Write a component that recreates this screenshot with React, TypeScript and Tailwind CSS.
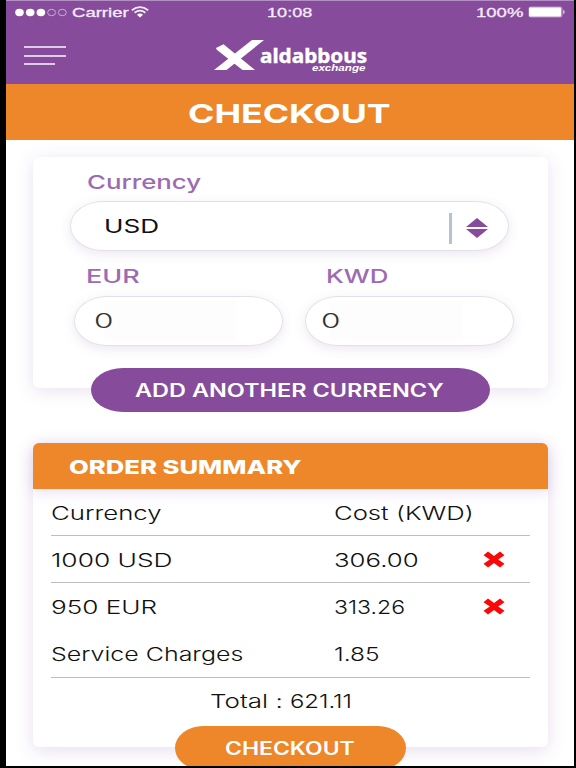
import { useLayoutEffect, useRef, useState } from "react"

// the wide lettering: text is stretched sideways until it fills its width
function Wide({ text, width, className = "" }: { text: string; width: number; className?: string }) {
    const ref = useRef<HTMLSpanElement>(null)
    const [scale, setScale] = useState(1)

    useLayoutEffect(() => {
        if (ref.current) setScale(width / ref.current.offsetWidth)
    }, [width, text])

    return (
        <span className={"block shrink-0 whitespace-nowrap " + className} style={{ width }}>
            <span ref={ref} className="inline-block origin-left" style={{ transform: `scaleX(${scale})` }}>{text}</span>
        </span>
    )
}

function StatusBar() {
    return (
        <div className="flex h-[24px] items-center pl-[9px] font-['Liberation_Sans',sans-serif] text-[13px] leading-[24px] text-[#f4edf7]">
            <svg width="53" height="10" viewBox="0 0 53 10" className="shrink-0">
                <ellipse cx="4.5" cy="4.5" rx="4.3" ry="3.7" fill="#fff" />
                <ellipse cx="15.2" cy="4.5" rx="4.3" ry="3.7" fill="#fff" />
                <ellipse cx="25.9" cy="4.5" rx="4.3" ry="3.7" fill="#fff" />
                <ellipse cx="36.6" cy="4.5" rx="4" ry="3.2" fill="none" stroke="#c9aed6" />
                <ellipse cx="47.3" cy="4.5" rx="4" ry="3.2" fill="none" stroke="#c9aed6" />
            </svg>
            <Wide text="Carrier" width={57} className="ml-[4px] [-webkit-text-stroke:0.3px_#f4edf7]" />
            <svg width="18" height="12" viewBox="0 0 18 12" className="-mt-[2px] ml-[2px] shrink-0">
                <path d="M0.8 4.2Q9-2 17.2 4.2M3.6 6.7Q9 2.6 14.4 6.7" fill="none" stroke="#f4edf7" strokeWidth="1.7" />
                <path d="M6 8.7Q9 6.3 12 8.7L9 11.6Z" fill="#fff" />
            </svg>
            <Wide text="10:08" width={46} className="ml-[118px] [-webkit-text-stroke:0.3px_#f4edf7]" />
            <Wide text="100%" width={47} className="ml-[163px] [-webkit-text-stroke:0.3px_#f4edf7]" />
            <svg width="38" height="12" viewBox="0 0 38 12" className="-mt-[2px] ml-[5px] shrink-0">
                <rect x="0.5" y="0.5" width="34" height="11" rx="2" fill="#b893c7" />
                <rect x="1" y="1.5" width="32" height="9" rx="1" fill="#fff" />
                <path d="M35.3 3.5Q38 6 35.3 8.5Z" fill="#eadff0" />
            </svg>
        </div>
    )
}

function NavBar() {
    return (
        <div className="flex h-[59px] pl-[18px]">
            <div className="mt-[21px] flex w-[42px] flex-col gap-[7px]">
                <div className="h-[2px] bg-[#dccde3]"></div>
                <div className="h-[2px] bg-[#dccde3]"></div>
                <div className="-mt-[1px] h-[2px] w-[31px] bg-[#dccde3]"></div>
            </div>
            <svg width="50" height="30" viewBox="0 0 50 30" className="mt-[15px] ml-[148px] shrink-0">
                <path d="M38 0H50L12.5 30H0Z" fill="#fff" />
                <path d="M2 8L9.5 4.2L41 30H28.5L2.8 9.8Z" fill="#fff" />
            </svg>
            <div className="mt-[22px] -ml-[4px] flex w-[107px] flex-col text-white">
                <Wide text="aldabbous" width={107} className="h-[17px] font-['Noto_Sans',sans-serif] text-[19px] leading-[18px] font-bold [-webkit-text-stroke:0.4px_#fff]" />
                <Wide text="exchange" width={54} className="ml-[52px] h-[8px] font-['Liberation_Sans',sans-serif] text-[9px] leading-[8px] font-bold italic" />
            </div>
        </div>
    )
}

function AmountInput({ value, inset }: { value: string; inset: string }) {
    return (
        <div className={"flex h-[50px] w-[209px] items-center rounded-[33px/25px] border border-[#e3e1e5] bg-white shadow-[0_3px_12px_rgba(125,75,155,0.14)] " + inset}>
            <Wide text={value} width={20} className="relative mt-[1px] text-[20.5px] font-light text-[#333]" />
            <div className="-ml-[10px] h-[40px] w-[132px] bg-[#fcfcfc]/60"></div>
        </div>
    )
}

function CurrencyCard() {
    return (
        <div className="mx-[27px] mt-[17px] flex h-[231px] w-[515px] flex-col rounded-[6px] bg-white shadow-[0_3px_18px_rgba(125,75,155,0.16)]">
            <Wide text="Currency" width={114} className="mt-[14px] ml-[54px] h-[24px] text-[19px] leading-[24px] font-medium text-[#9d6bb2]" />
            <div className="mt-[6px] ml-[37px] flex h-[50px] w-[439px] items-center rounded-[33px/25px] border border-[#e3e1e5] bg-white pl-[33px] shadow-[0_3px_12px_rgba(125,75,155,0.14)]">
                <Wide text="USD" width={55} className="mt-[2px] text-[19px] text-[#111]" />
                <div className="mt-[5px] ml-[290px] h-[31px] w-[3px] bg-[#b6c2d1]"></div>
                <svg width="22" height="20" viewBox="0 0 22 20" className="mt-[4px] ml-[14px]">
                    <path d="M0 9L11 0L22 9ZM0 11L11 20L22 11Z" fill="#874b9c" />
                </svg>
            </div>
            <div className="mt-[13px] ml-[53px] flex h-[24px] gap-[186px] text-[18.5px] leading-[25px] font-medium text-[#9d6bb2]">
                <Wide text="EUR" width={54} />
                <Wide text="KWD" width={63} />
            </div>
            <div className="mt-[8px] ml-[41px] flex gap-[22px]">
                <AmountInput value="0" inset="pl-[19px]" />
                <AmountInput value="0" inset="pl-[15px]" />
            </div>
        </div>
    )
}

function RemoveIcon() {
    return (
        <svg width="22" height="17" viewBox="0 0 22 17">
            <path d="M0.5 12.8L6.8 8.5L0.5 4.2L5 0.5L11 4.9L17 0.5L21.5 4.2L15.2 8.5L21.5 12.8L17 16.5L11 12.1L5 16.5Z" fill="#fb0707" />
        </svg>
    )
}

const rows = [
    { name: "Currency", nameWidth: 110, cost: "Cost (KWD)", costWidth: 140, line: true, remove: false },
    { name: "1000 USD", nameWidth: 121, cost: "306.00", costWidth: 85, line: true, remove: true },
    { name: "950 EUR", nameWidth: 106, cost: "313.26", costWidth: 71, line: false, remove: true },
    { name: "Service Charges", nameWidth: 193, cost: "1.85", costWidth: 45, line: true, remove: false },
]

function OrderSummary() {
    return (
        <div className="mx-[27px] mt-[31px] h-[304px] w-[515px] rounded-[6px] bg-white shadow-[0_4px_18px_rgba(125,75,155,0.18)]">
            <div className="flex h-[46px] items-center rounded-t-[6px] bg-[#ed872a] pl-[36px] shadow-[0_3px_14px_rgba(125,75,200,0.18)]">
                <Wide text="ORDER SUMMARY" width={232} className="mt-[4px] text-[19px] font-extrabold text-white" />
            </div>
            <div className="mx-[18px] text-[18.5px] font-light text-[#111]">
                {rows.map((row) => (
                    <div key={row.name} className={"flex h-[47.2px] items-center border-b " + (row.line ? "border-[#bdbdbd]" : "border-transparent")}>
                        <div className="w-[283px] pt-[3px]">
                            <Wide text={row.name} width={row.nameWidth} />
                        </div>
                        <Wide text={row.cost} width={row.costWidth} className="pt-[3px]" />
                        {row.remove && (
                            <button className="mr-[25px] ml-auto">
                                <RemoveIcon />
                            </button>
                        )}
                    </div>
                ))}
                <div className="flex h-[48px] items-center gap-[7px] pl-[159px]">
                    <Wide text="Total :" width={73} />
                    <Wide text="621.11" width={62} />
                </div>
            </div>
        </div>
    )
}

export default function App() {
    return (
        <div className="h-[768px] w-[576px] overflow-hidden bg-black pr-[2px] pb-[2px] pl-[6px] font-['Inter',sans-serif]">
            <div className="h-[766px] overflow-hidden bg-white">
                <div className="h-[84px] border-t border-[#b48fc3] bg-[#874b9c]">
                    <StatusBar />
                    <NavBar />
                </div>
                <div className="flex h-[56px] items-center bg-[#ed872a] pl-[182px]">
                    <Wide text="CHECKOUT" width={203} className="mt-[3px] text-[26px] font-bold text-white" />
                </div>
                <CurrencyCard />
                <button className="relative -mt-[20px] ml-[85px] flex h-[44px] w-[399px] items-center rounded-[32px/22px] bg-[#874b9c] pl-[44px] text-left">
                    <Wide text="ADD ANOTHER CURRENCY" width={309} className="text-[18px] font-semibold text-white" />
                </button>
                <OrderSummary />
                <button className="relative -mt-[21px] ml-[169px] flex h-[44px] w-[231px] items-center rounded-[28px/22px] bg-[#ed872a] pl-[50px] text-left">
                    <Wide text="CHECKOUT" width={130} className="text-[18px] font-semibold text-white" />
                </button>
            </div>
        </div>
    )
}
